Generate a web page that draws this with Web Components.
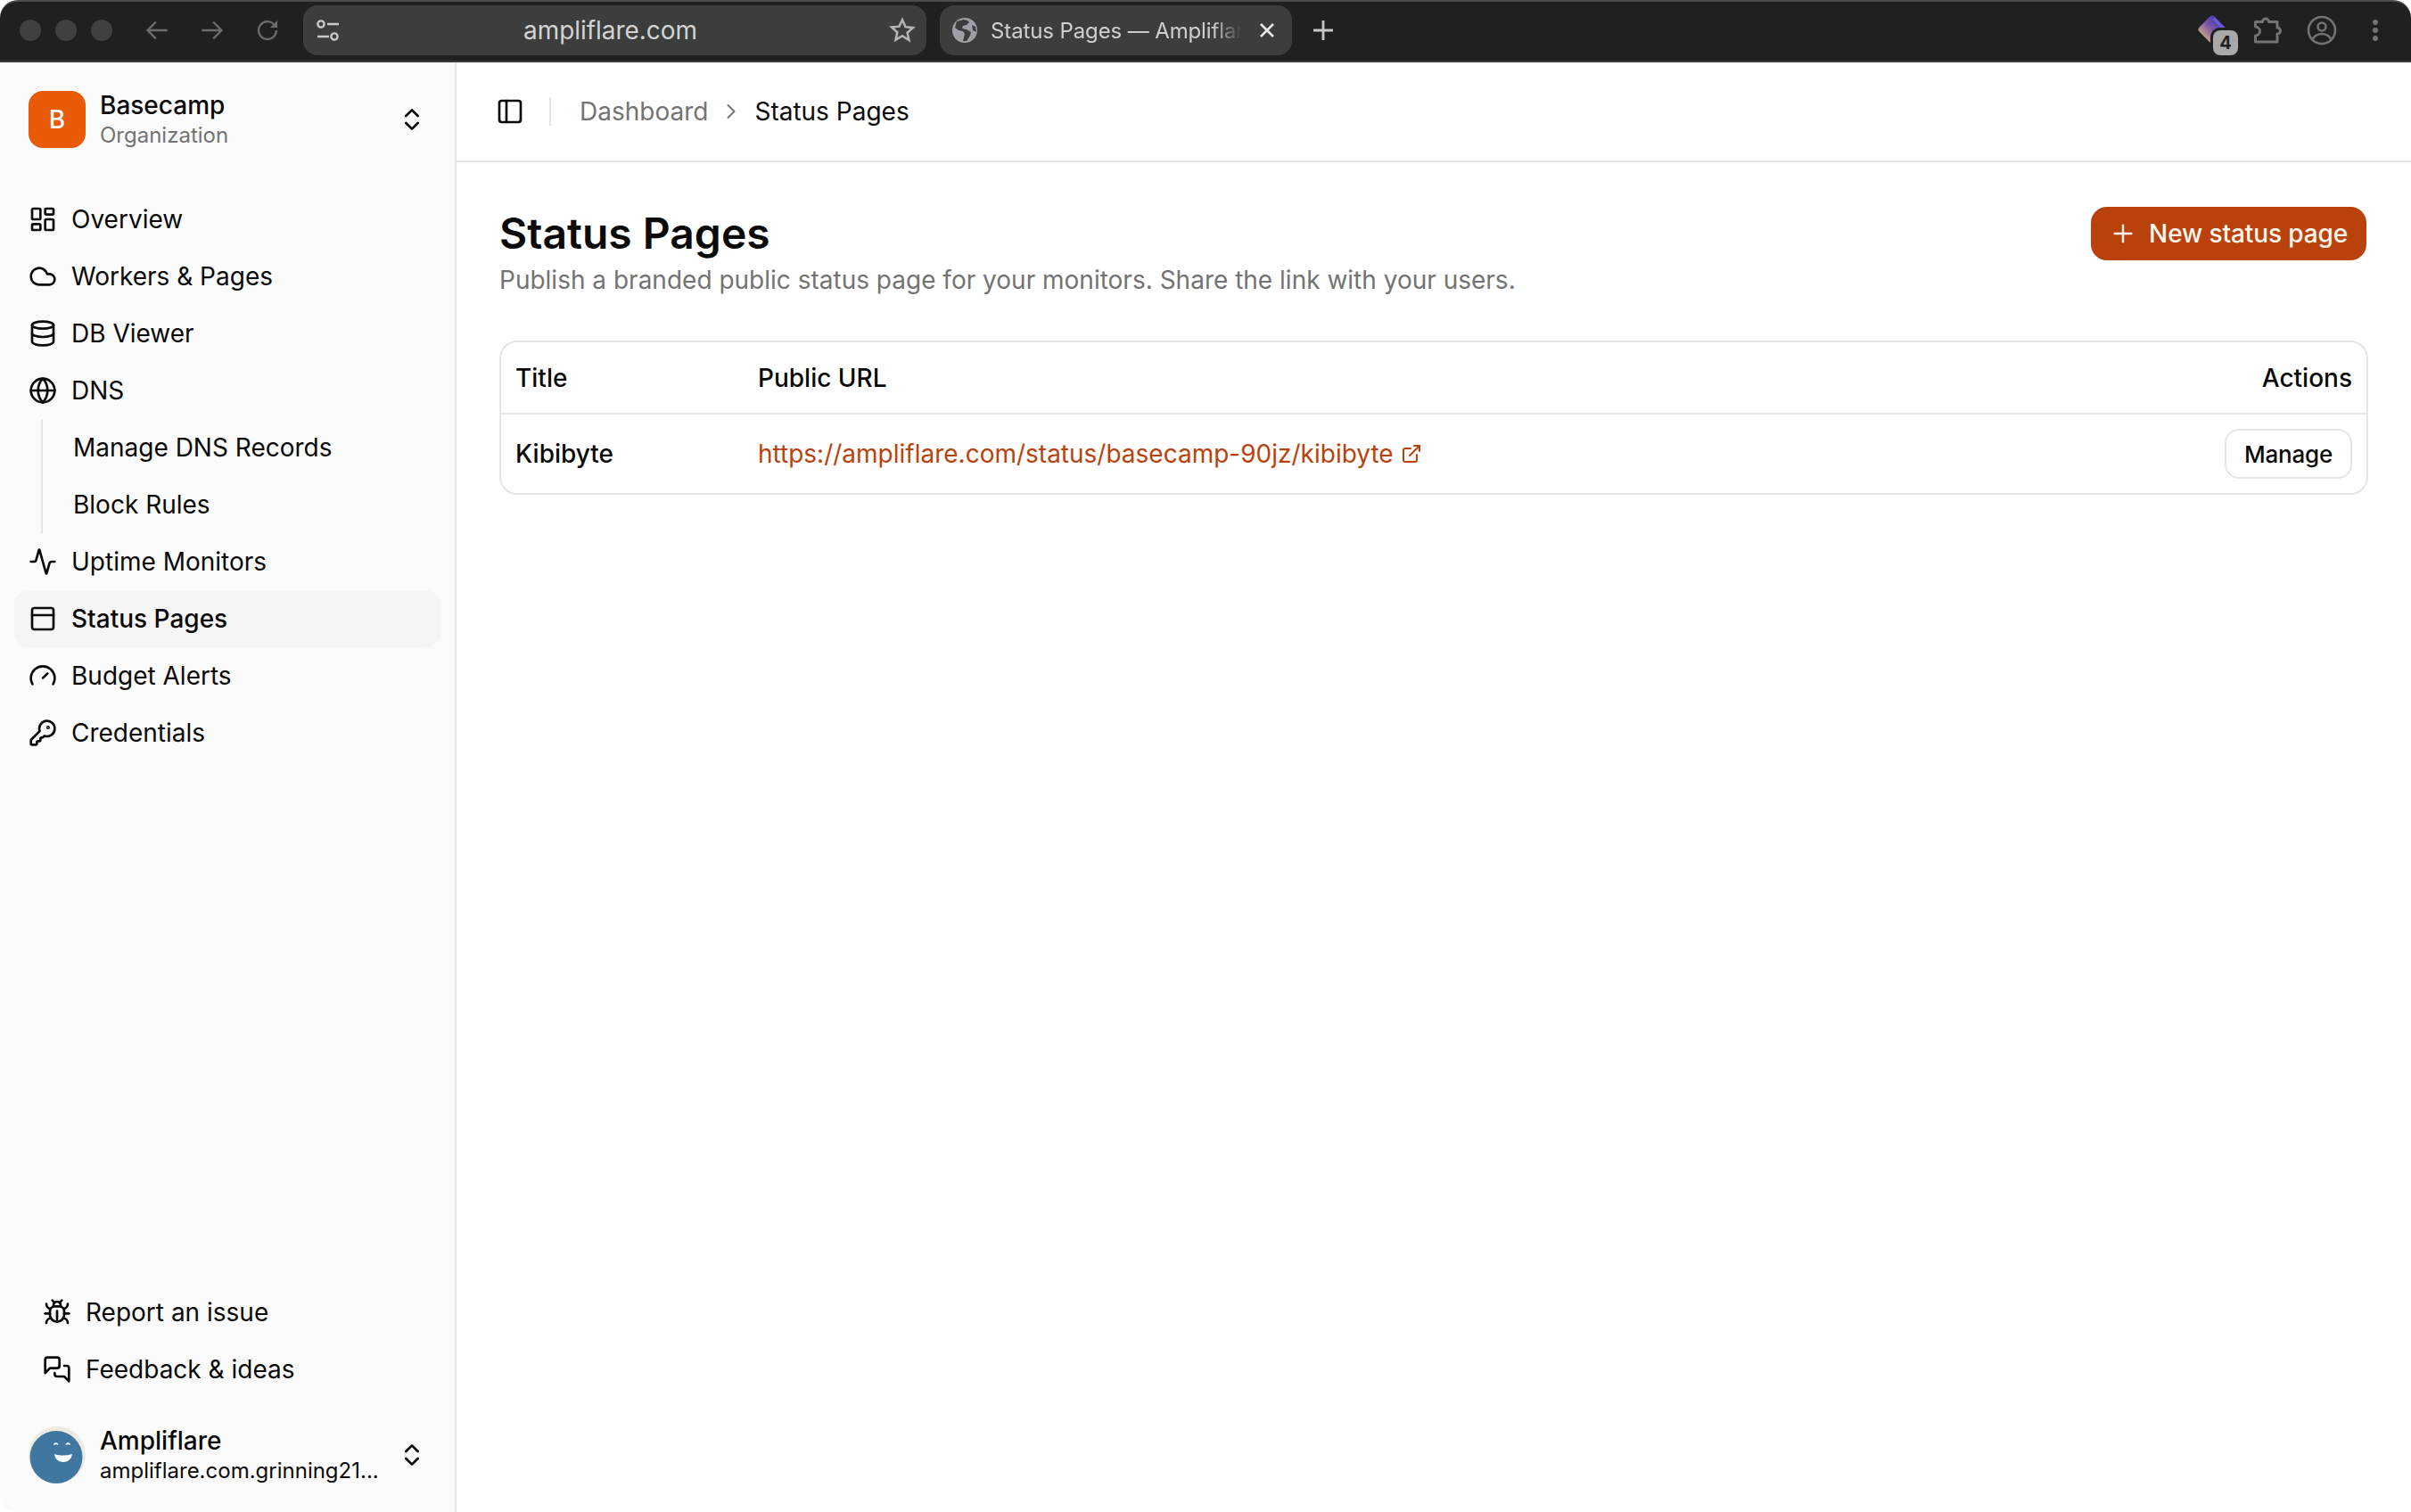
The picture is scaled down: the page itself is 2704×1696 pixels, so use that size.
<!DOCTYPE html>
<html lang="en"><head><meta charset="utf-8"><title>Status Pages — Ampliflare</title>
<style>
html,body{margin:0;padding:0;height:100%;background:#fff}
body{font-family:Inter,"Noto Sans",sans-serif;font-size:28px;color:#0a0a0a}
app-window{height:1696px}
</style></head><body>
<app-window>
  <browser-bar slot="bar" url="ampliflare.com" tab="Status Pages — Ampliflar"></browser-bar>
  <app-sidebar slot="side">
    <org-row name="Basecamp" role="Organization"></org-row>
    <nav-list>
      <nav-item icon="dash">Overview</nav-item>
      <nav-item icon="cloud">Workers &amp; Pages</nav-item>
      <nav-item icon="db">DB Viewer</nav-item>
      <nav-item icon="globe">DNS</nav-item>
      <nav-sub>
        <nav-item sub>Manage DNS Records</nav-item>
        <nav-item sub>Block Rules</nav-item>
      </nav-sub>
      <nav-item icon="pulse">Uptime Monitors</nav-item>
      <nav-item icon="panel" active>Status Pages</nav-item>
      <nav-item icon="gauge">Budget Alerts</nav-item>
      <nav-item icon="key">Credentials</nav-item>
    </nav-list>
    <nav-list slot="foot" inset>
      <nav-item icon="bug">Report an issue</nav-item>
      <nav-item icon="chat">Feedback &amp; ideas</nav-item>
    </nav-list>
    <user-row slot="user" name="Ampliflare" email="ampliflare.com.grinning21..."></user-row>
  </app-sidebar>
  <app-main slot="main"></app-main>
</app-window>
<script>
const ICONS={
dash:'<rect x="3" y="3" width="7" height="9" rx="1"/><rect x="14" y="3" width="7" height="5" rx="1"/><rect x="14" y="12" width="7" height="9" rx="1"/><rect x="3" y="16" width="7" height="5" rx="1"/>',
cloud:'<path d="M17.5 19H9a7 7 0 1 1 6.71-9h1.79a4.5 4.5 0 1 1 0 9Z"/>',
db:'<ellipse cx="12" cy="5" rx="9" ry="3"/><path d="M3 5V19A9 3 0 0 0 21 19V5"/><path d="M3 12A9 3 0 0 0 21 12"/>',
globe:'<circle cx="12" cy="12" r="10"/><path d="M12 2a14.5 14.5 0 0 0 0 20 14.5 14.5 0 0 0 0-20"/><path d="M2 12h20"/>',
pulse:'<path d="M22 12h-2.48a2 2 0 0 0-1.93 1.46l-2.35 8.36a.25.25 0 0 1-.48 0L9.24 2.18a.25.25 0 0 0-.48 0l-2.35 8.36A2 2 0 0 1 4.49 12H2"/>',
panel:'<rect width="18" height="18" x="3" y="3" rx="2"/><path d="M3 9h18"/>',
gauge:'<path d="m12 14 4-4"/><path d="M3.34 19a10 10 0 1 1 17.32 0"/>',
key:'<path d="M2.586 17.414A2 2 0 0 0 2 18.828V21a1 1 0 0 0 1 1h3a1 1 0 0 0 1-1v-1a1 1 0 0 1 1-1h1a1 1 0 0 0 1-1v-1a1 1 0 0 1 1-1h.172a2 2 0 0 0 1.414-.586l.814-.814a6.5 6.5 0 1 0-4-4z"/><circle cx="16.5" cy="7.5" r=".5" fill="currentColor"/>',
bug:'<path d="m8 2 1.88 1.88"/><path d="M14.12 3.88 16 2"/><path d="M9 7.13v-1a3.003 3.003 0 1 1 6 0v1"/><path d="M12 20c-3.3 0-6-2.7-6-6v-3a4 4 0 0 1 4-4h4a4 4 0 0 1 4 4v3c0 3.3-2.7 6-6 6"/><path d="M12 20v-9"/><path d="M6.53 9C4.6 8.8 3 7.1 3 5"/><path d="M6 13H2"/><path d="M3 21c0-2.1 1.7-3.9 3.8-4"/><path d="M20.97 5c0 2.1-1.6 3.8-3.5 4"/><path d="M22 13h-4"/><path d="M17.2 17c2.1.1 3.8 1.9 3.8 4"/>',
chat:'<path d="M14 9a2 2 0 0 1-2 2H6l-4 4V4a2 2 0 0 1 2-2h8a2 2 0 0 1 2 2z"/><path d="M18 9h2a2 2 0 0 1 2 2v11l-4-4h-6a2 2 0 0 1-2-2v-1"/>',
updown:'<path d="m7 15 5 5 5-5"/><path d="m7 9 5-5 5 5"/>',
sidebar:'<rect width="18" height="18" x="3" y="3" rx="2"/><path d="M9 3v18"/>',
right:'<path d="m9 18 6-6-6-6"/>',
plus:'<path d="M5 12h14"/><path d="M12 5v14"/>',
ext:'<path d="M15 3h6v6"/><path d="M10 14 21 3"/><path d="M18 13v6a2 2 0 0 1-2 2H5a2 2 0 0 1-2-2V8a2 2 0 0 1 2-2h6"/>'
};
const svg=(n,s=32,w=2,extra='')=>`<svg xmlns="http://www.w3.org/2000/svg" width="${s}" height="${s}" viewBox="0 0 24 24" fill="none" stroke="currentColor" stroke-width="${w}" stroke-linecap="round" stroke-linejoin="round" ${extra}>${ICONS[n]}</svg>`;
const esc=s=>String(s).replace(/&/g,'&amp;').replace(/</g,'&lt;');
class Base extends HTMLElement{constructor(){super();this.attachShadow({mode:'open'})}connectedCallback(){this.render()}}

customElements.define('app-window',class extends Base{render(){this.shadowRoot.innerHTML=`<style>
:host{display:flex;flex-direction:column;width:2704px;height:1696px;overflow:hidden;background:#fff}
.body{flex:1;display:flex;min-height:0}
.m{flex:1;min-width:0;display:flex}
</style><slot name="bar"></slot><div class="body"><slot name="side"></slot><div class="m"><slot name="main"></slot></div></div>`}});

customElements.define('browser-bar',class extends Base{render(){
const u=esc(this.getAttribute('url')),t=esc(this.getAttribute('tab'));
this.shadowRoot.innerHTML=`<style>
:host{display:flex;align-items:center;box-sizing:border-box;height:70px;flex:none;background:#1f2120;border-top:2px solid #4a4b4a;border-bottom:2px solid #3b3d3c;border-radius:20px 20px 0 0;padding:0 0 2px 22px;color:#c8c8c8;font-size:26px}
.dots{display:flex;gap:16px;flex:none}
.dots i{display:block;flex:none;width:24px;height:24px;border-radius:50%;background:#3f4140}
.navs{display:flex;flex:none;margin-left:36px;gap:34px;color:#6a6c6b;margin-right:26px}
.navs svg{display:block}
.addr{flex:none;box-sizing:border-box;width:699px;height:56px;background:#3c3e3d;border-radius:16px;display:flex;align-items:center;padding:0 12px 0 14px;margin-right:15px;color:#d3d3d3}
.addr .tune{flex:none;color:#c8c8c8}
.addr .u{flex:1;text-align:center;font-size:28px;padding-right:10px;letter-spacing:-.05px}
.addr .star{flex:none;color:#b5b5b5}
.tab{flex:none;box-sizing:border-box;width:395px;height:56px;background:#3c3e3d;border-radius:16px;display:flex;align-items:center;padding:0 14px}
.tab .t{width:283px;margin-left:15px;white-space:nowrap;font-size:24px;letter-spacing:-.12px;color:#cfcfcf;-webkit-mask-image:linear-gradient(90deg,#000 calc(100% - 34px),transparent calc(100% - 2px));mask-image:linear-gradient(90deg,#000 calc(100% - 34px),transparent calc(100% - 2px));flex:none}
.tab .x{margin-left:15px;flex:none;color:#e6e6e6}
.plus{margin-left:22px;color:#c8c8c8;flex:none}
.sp{flex:1}
.right{display:flex;align-items:center;color:#727473;padding-right:35px}
.ext{position:relative;flex:none;width:40px;height:40px;margin-right:24px;display:block}
.badge{position:absolute;left:21px;top:20px;box-sizing:border-box;width:28px;height:28px;border-radius:8px;background:#a8a8a8;color:#1f2120;font-size:20px;font-weight:700;display:flex;align-items:center;justify-content:center;box-shadow:0 0 0 3px #1f2120}
.right svg{display:block;flex:none}
</style>
<div class="dots"><i></i><i></i><i></i></div>
<div class="navs">
<svg width="28" height="28" viewBox="0 0 24 24" fill="none" stroke="currentColor" stroke-width="2"><path d="M22 12H3M11 4l-8 8 8 8"/></svg>
<svg width="28" height="28" viewBox="0 0 24 24" fill="none" stroke="currentColor" stroke-width="2"><path d="M2 12h19M13 4l8 8-8 8"/></svg>
<svg width="28" height="28" viewBox="0 0 24 24" fill="none" stroke="currentColor" stroke-width="2"><path d="M20.5 12a8.5 8.5 0 1 1-2.7-6.2L21 8.8"/><path d="M21.5 2.5v7h-7z" stroke-width="0" fill="currentColor"/></svg>
</div>
<div class="addr">
<svg class="tune" width="28" height="28" viewBox="0 0 28 28" fill="none" stroke="currentColor" stroke-width="2.4"><circle cx="6" cy="7" r="3.6"/><path d="M13 7h13M2 21h13"/><circle cx="21" cy="21" r="3.6"/></svg>
<div class="u">${u}</div>
<svg class="star" width="30" height="30" viewBox="0 0 24 24" fill="none" stroke="currentColor" stroke-width="2" stroke-linejoin="miter"><path d="M12 2.6l2.8 6.3 6.8.7-5.1 4.6 1.5 6.7L12 17l-6 3.5 1.5-6.7-5.1-4.6 6.8-.7z"/></svg>
</div>
<div class="tab">
<svg width="28" height="28" viewBox="0 0 28 28" style="flex:none"><circle cx="14" cy="14" r="14" fill="#9da0a5"/><path d="M13 2l-8 2-2 7 4 3 5 1 2 3-2 8h4l4-6 1-4-5-3-5-1 1-3 4-1 3-3-2-2z" fill="#3c3e3d"/><path d="M22 8l4 2 1 6-4-2z" fill="#3c3e3d"/></svg>
<div class="t">${t}</div>
<svg class="x" width="24" height="24" viewBox="0 0 24 24" fill="none" stroke="currentColor" stroke-width="2.6"><path d="M5 5l14 14M19 5L5 19"/></svg>
</div>
<svg class="plus" width="26" height="26" viewBox="0 0 26 26" fill="none" stroke="currentColor" stroke-width="2.8"><path d="M13 2v22M2 13h22"/></svg>
<div class="sp"></div>
<div class="right">
<span class="ext"><svg width="40" height="40" viewBox="0 0 40 40"><defs><linearGradient id="g" x1="0" y1="0" x2="0" y2="1"><stop offset="0" stop-color="#4b38b8"/><stop offset=".5" stop-color="#7a57a8"/><stop offset="1" stop-color="#c79a86"/></linearGradient></defs><rect x="8" y="7" width="24" height="24" rx="4" transform="rotate(45 20 19)" fill="url(#g)"/><path d="M23 5.500l11 11-2.500 2.500-11-11z" fill="#6a5bd0"/></svg><span class="badge">4</span></span>
<svg width="34" height="34" viewBox="0 0 34 34" fill="none" stroke="currentColor" stroke-width="3" stroke-linejoin="round" style="margin-right:28px"><path d="M4.500 7.500H12.500a3.500 3.500 0 0 1 7 0H29V14a3.500 3.500 0 0 1 0 7V30H4.500V23a5 5 0 0 0 0-10Z"/></svg>
<svg width="34" height="34" viewBox="0 0 34 34" fill="none" stroke="currentColor" stroke-width="2.6" style="margin-right:38px"><circle cx="17" cy="17" r="15"/><circle cx="17" cy="13" r="4.500"/><path d="M6.500 27c3-5 7-6 10.500-6s7.500 1 10.500 6"/></svg>
<svg width="10" height="32" viewBox="0 0 10 32" fill="currentColor"><circle cx="5" cy="7" r="3"/><circle cx="5" cy="16" r="3"/><circle cx="5" cy="25" r="3"/></svg>
</div>`}});

customElements.define('updown-icon',class extends Base{render(){this.shadowRoot.innerHTML=`<style>:host{display:block;flex:none;width:32px;height:32px;color:#0a0a0a}svg{display:block}</style>${svg('updown',32,2)}`}});

customElements.define('org-row',class extends Base{render(){this.shadowRoot.innerHTML=`<style>
:host{display:flex;align-items:center;box-sizing:border-box;height:64px;padding:0 32px;flex:none}
.logo{flex:none;width:64px;height:64px;border-radius:16px;background:#e85a06;color:#fff;display:flex;align-items:center;justify-content:center;font-size:28px;font-weight:500}
.txt{flex:1;margin-left:16px;min-width:0}
.n{font-size:28px;line-height:36px;font-weight:500;color:#0a0a0a}
.r{font-size:24px;line-height:32px;color:#737373}
</style><div class="logo">B</div><div class="txt"><div class="n">${esc(this.getAttribute('name'))}</div><div class="r">${esc(this.getAttribute('role'))}</div></div><updown-icon></updown-icon>`}});

customElements.define('user-row',class extends Base{render(){this.shadowRoot.innerHTML=`<style>
:host{display:flex;align-items:center;box-sizing:border-box;height:64px;padding:0 32px;flex:none}
.av{flex:none;width:64px;height:64px;display:block}
.txt{flex:1;margin-left:16px;min-width:0}
.n{font-size:28px;line-height:36px;font-weight:500;color:#0a0a0a}
.r{font-size:24px;line-height:32px;color:#0a0a0a;white-space:nowrap}
</style><svg class="av" viewBox="0 0 64 64"><circle cx="32" cy="32" r="32" fill="#ecebdd"/><circle cx="31" cy="34.500" r="29.500" fill="#3f77a0"/><path d="M28 21a2.700 2.700 0 0 1 5.400 0c-1-1-4.400-1-5.400 0z" fill="#fff"/><path d="M41.500 21a2.700 2.700 0 0 1 5.400 0c-1-1-4.400-1-5.400 0z" fill="#fff"/><path d="M29 31c6 2 13 2 20 0-1 6-5 9-10 9-5 0-9-3-10-9z" fill="#fff"/></svg><div class="txt"><div class="n">${esc(this.getAttribute('name'))}</div><div class="r">${esc(this.getAttribute('email'))}</div></div><updown-icon></updown-icon>`}});

customElements.define('nav-list',class extends Base{render(){this.shadowRoot.innerHTML=`<style>
:host{display:flex;flex-direction:column;padding:0 16px;margin-top:48px;flex:none}
:host([inset]){padding:0 32px;margin-top:0}
</style><slot></slot>`}});

customElements.define('nav-sub',class extends Base{render(){this.shadowRoot.innerHTML=`<style>
:host{display:flex;flex-direction:column;margin-left:30px;border-left:2px solid #e5e5e5;height:128px}
</style><slot></slot>`}});

customElements.define('nav-item',class extends Base{render(){
const i=this.getAttribute('icon');
this.shadowRoot.innerHTML=`<style>
:host{display:flex;align-items:center;box-sizing:border-box;height:64px;flex:none;border-radius:16px;padding:0 16px;gap:16px;font-size:28px;color:#0a0a0a;white-space:nowrap}
:host([active]){background:#f5f5f5;font-weight:500}
:host([sub]){padding-left:34px}
svg{display:block;flex:none}
</style>${i?svg(i):''}<slot></slot>`}});

customElements.define('app-sidebar',class extends Base{render(){this.shadowRoot.innerHTML=`<style>
:host{display:flex;flex-direction:column;box-sizing:border-box;width:512px;flex:none;background:#fafafa;border-right:2px solid #e5e5e5;border-bottom-left-radius:20px;padding:32px 0;overflow:hidden}
.sp{flex:1}
.f{height:32px;flex:none}
</style><slot></slot><div class="sp"></div><slot name="foot"></slot><div class="f"></div><slot name="user"></slot>`}});

customElements.define('top-bar',class extends Base{render(){this.shadowRoot.innerHTML=`<style>
:host{display:flex;align-items:center;box-sizing:border-box;height:112px;flex:none;border-bottom:2px solid #e5e5e5;padding:0 32px 0 44px;font-size:28px}
svg{display:block;flex:none}
.sep{width:2px;height:32px;background:#e5e5e5;margin:0 32px 0 28px;flex:none}
.d{color:#737373}
.c{color:#737373;margin:0 12px}
.s{color:#0a0a0a}
</style>${svg('sidebar',32,2)}<div class="sep"></div><span class="d">Dashboard</span><span class="c">${svg('right',28,1.7)}</span><span class="s">Status Pages</span>`}});

customElements.define('page-head',class extends Base{render(){this.shadowRoot.innerHTML=`<style>
:host{display:flex;justify-content:space-between;align-items:flex-start;flex:none}
h1{margin:0;font-size:48px;line-height:64px;font-weight:600;color:#0a0a0a}
p{margin:0;font-size:28px;line-height:40px;color:#737373}
.b{flex:none;margin:2px 2px 0 0}
</style><div><h1>${esc(this.getAttribute('title'))}</h1><p>${esc(this.getAttribute('sub'))}</p></div><primary-btn class="b">New status page</primary-btn>`}});

customElements.define('primary-btn',class extends Base{render(){this.shadowRoot.innerHTML=`<style>
:host{display:inline-flex;align-items:center;box-sizing:border-box;height:60px;padding:0 21px 0 20px;gap:13px;border-radius:18px;background:#b9420c;color:#fff7ed;font-size:28px;font-weight:500;letter-spacing:-.12px;white-space:nowrap}
svg{display:block}
</style>${svg('plus',32,1.8)}<slot></slot>`}});

customElements.define('out-btn',class extends Base{render(){this.shadowRoot.innerHTML=`<style>
:host{display:inline-flex;align-items:center;justify-content:center;box-sizing:border-box;height:56px;padding:0 20px;border-radius:16px;border:2px solid #e5e5e5;background:#fff;color:#0a0a0a;font-size:26px;font-weight:500;letter-spacing:-.2px;white-space:nowrap}
</style><slot></slot>`}});

customElements.define('status-table',class extends Base{render(){this.shadowRoot.innerHTML=`<style>
:host{display:block;box-sizing:border-box;border:2px solid #e5e5e5;border-radius:20px;margin-top:48px;flex:none;font-size:28px}
.r{display:grid;grid-template-columns:272px 1fr auto;align-items:center;padding:0 16px}
.h{height:79px;border-bottom:2px solid #e5e5e5;font-weight:500}
.b{height:88px}
.k{font-weight:500}
a{color:#b9420c;text-decoration:none;display:inline-flex;align-items:center;gap:8px}
a svg{display:block}
</style>
<div class="r h"><div>Title</div><div>Public URL</div><div>Actions</div></div>
<div class="r b"><div class="k">Kibibyte</div><div><a href="#">https://ampliflare.com/status/basecamp-90jz/kibibyte ${svg('ext',24,2)}</a></div><div><out-btn>Manage</out-btn></div></div>`}});

customElements.define('app-main',class extends Base{render(){this.shadowRoot.innerHTML=`<style>
:host{display:flex;flex-direction:column;flex:1;min-width:0}
.c{flex:1;display:flex;flex-direction:column;padding:48px}
</style><top-bar></top-bar><div class="c"><page-head title="Status Pages" sub="Publish a branded public status page for your monitors. Share the link with your users."></page-head><status-table></status-table></div>`}});
</script>
</body></html>
